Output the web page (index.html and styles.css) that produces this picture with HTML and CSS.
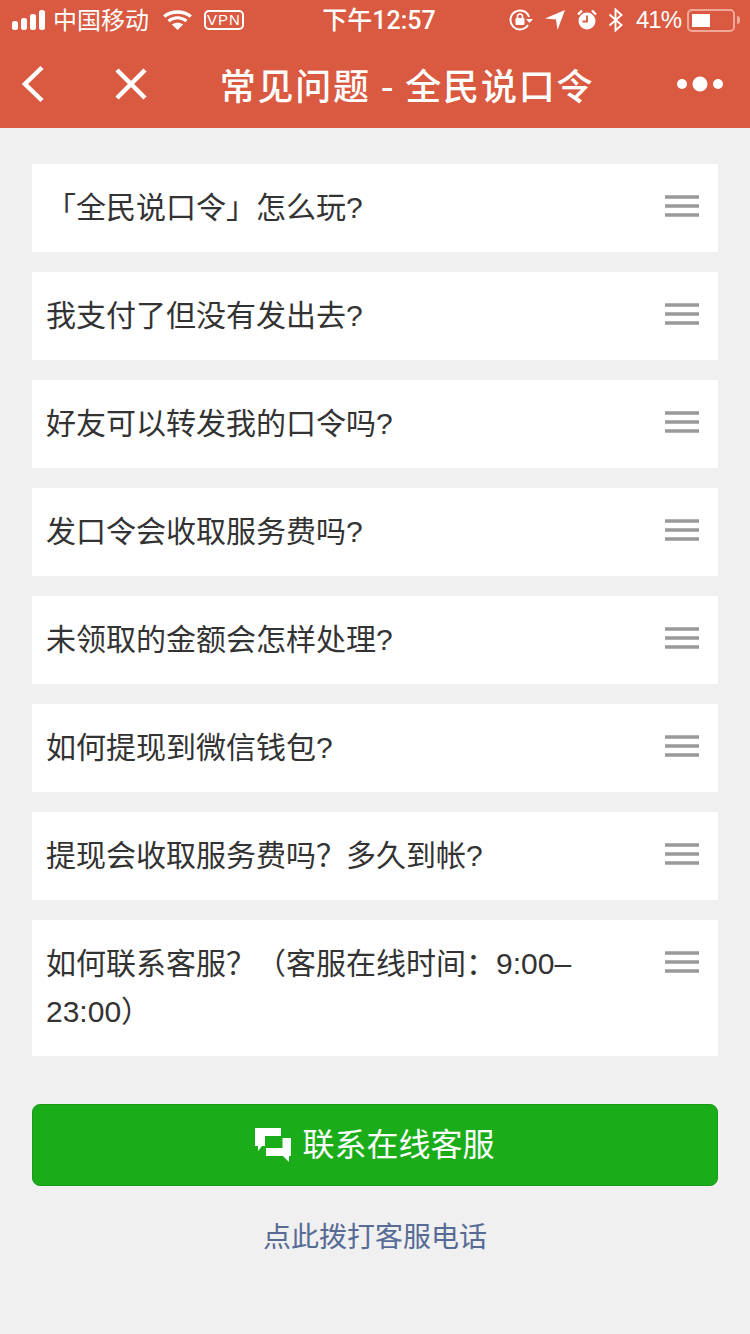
FILE: index.html
```html
<!DOCTYPE html>
<html lang="zh-CN">
<head>
    <meta charset="UTF-8">
    <title>常见问题 - 全民说口令</title>
    <link rel="stylesheet" href="styles.css">
</head>
<body>
<svg class="defs" width="0" height="0">
    <symbol id="menu" viewBox="0 0 34 22">
        <path d="M0 2H34M0 11H34M0 20H34" stroke="#999" stroke-width="3.500" fill="none"/>
    </symbol>
</svg>
<div class="head">
    <div class="status">
        <div class="status-left">
            <svg class="signal" width="33" height="20" viewBox="0 0 33 20">
                <rect x="0" y="11" width="6" height="9" rx="2.500"/>
                <rect x="9" y="8" width="6" height="12" rx="2.500"/>
                <rect x="18" y="4" width="6" height="16" rx="2.500"/>
                <rect x="27" y="0" width="6" height="20" rx="2.500"/>
            </svg>
            <span class="carrier">中国移动</span>
            <svg class="wifi" width="29" height="20" viewBox="0 0 29 20">
                <path d="M1.200 6.500C8.500 0.500 20.500 0.500 27.800 6.500M5.500 11C11 6.800 18 6.800 23.500 11" fill="none" stroke="#fff" stroke-width="3.400"/>
                <path d="M8.800 14.600L14.500 20L20.200 14.600C17 12 12 12 8.800 14.600Z" fill="#fff"/>
            </svg>
            <span class="vpn">VPN</span>
        </div>
        <div class="time">下午12:57</div>
        <div class="status-right">
            <svg class="lock" width="24" height="22" viewBox="0 0 24 22">
                <path d="M19 16A9.500 9.500 0 1 1 20 8" fill="none" stroke="#fff" stroke-width="2"/>
                <path d="M17 10H24L20.500 14Z" fill="#fff"/>
                <path d="M8.500 9V7.500A2.500 2.500 0 0 1 13.500 7.500V9" fill="none" stroke="#fff" stroke-width="1.600"/>
                <rect x="6.500" y="9" width="9" height="7" rx="1" fill="#fff"/>
            </svg>
            <svg class="arrow" width="20" height="20" viewBox="0 0 20 20">
                <path d="M0 8.500L20 0L12.500 20L11 9.500Z" fill="#fff"/>
            </svg>
            <svg class="alarm" width="20" height="22" viewBox="0 0 20 22">
                <circle cx="10" cy="12" r="8.500" fill="#fff"/>
                <path d="M10 6.500V12.500H5.500" fill="none" stroke="#d95a40" stroke-width="1.800"/>
                <path d="M1 5.500L5 1.500M19 5.500L15 1.500" stroke="#fff" stroke-width="2.400" fill="none"/>
            </svg>
            <svg class="blue" width="16" height="24" viewBox="0 0 16 24">
                <path d="M1.500 6.500L13.500 17L7.500 22.500V1.500L13.500 7L1.500 17.500" fill="none" stroke="#fff" stroke-width="1.900"/>
            </svg>
            <span class="percent">41%</span>
            <div class="battery"><i class="battery-fill"></i></div>
            <i class="battery-cap"></i>
        </div>
    </div>
    <div class="nav">
        <svg class="nav-back" width="24" height="38" viewBox="0 0 24 38">
            <path d="M21 2.500L4 19L21 35.500" fill="none" stroke="#fff" stroke-width="4.500"/>
        </svg>
        <svg class="nav-close" width="32" height="32" viewBox="0 0 32 32">
            <path d="M2 2L30 30M30 2L2 30" fill="none" stroke="#fff" stroke-width="4.500"/>
        </svg>
        <h1 class="nav-title">常见问题 - 全民说口令</h1>
        <svg class="nav-more" width="46" height="18" viewBox="0 0 46 18">
            <circle cx="5" cy="9" r="5" fill="#fff"/>
            <circle cx="23" cy="9" r="7.500" fill="#fff"/>
            <circle cx="41" cy="9" r="5" fill="#fff"/>
        </svg>
    </div>
</div>

<ul class="list">
    <li><span>「全民说口令」怎么玩?</span><svg class="icon"><use href="#menu"/></svg></li>
    <li><span>我支付了但没有发出去?</span><svg class="icon"><use href="#menu"/></svg></li>
    <li><span>好友可以转发我的口令吗?</span><svg class="icon"><use href="#menu"/></svg></li>
    <li><span>发口令会收取服务费吗?</span><svg class="icon"><use href="#menu"/></svg></li>
    <li><span>未领取的金额会怎样处理?</span><svg class="icon"><use href="#menu"/></svg></li>
    <li><span>如何提现到微信钱包?</span><svg class="icon"><use href="#menu"/></svg></li>
    <li><span>提现会收取服务费吗？多久到帐?</span><svg class="icon"><use href="#menu"/></svg></li>
    <li><span>如何联系客服？（客服在线时间：9:00–23:00）</span><svg class="icon"><use href="#menu"/></svg></li>
</ul>

<a class="btn">
    <svg class="btn-icon" width="36" height="34" viewBox="0 0 36 34">
        <path d="M0 0H26V8H10V18H7L3 23V18H0Z" fill="#fff"/>
        <path d="M27.500 10H36V28H34V34L28 28H11V20H27.500Z" fill="#fff"/>
    </svg>
    <span>联系在线客服</span>
</a>
<a class="tel">点此拨打客服电话</a>
</body>
</html>
```

FILE: styles.css
```css
*{
    margin: 0;
    padding: 0;
    list-style: none;
    box-sizing: border-box;
}
body{
    background: #f0f0f0;
    font-family: "Liberation Sans", "Noto Sans CJK SC", sans-serif;
    color: #333;
}
.defs{
    position: absolute;
}
.head{
    background: #d95a40;
    color: #fff;
}
.status{
    height: 40px;
    display: flex;
    align-items: center;
    font-size: 24px;
}
.status-left{
    flex: 1;
    display: flex;
    align-items: center;
    padding-left: 12px;
}
.carrier{
    margin-left: 8px;
    width: 96px;
    white-space: nowrap;
    line-height: 28px;
    padding-top: 1px;
}
.signal{
    fill: #fff;
}
.wifi{
    margin-left: 14px;
}
.vpn{
    margin-left: 12px;
    width: 40px;
    height: 20px;
    border: 2px solid #fff;
    border-radius: 5px;
    font-size: 15px;
    line-height: 16px;
    letter-spacing: 1px;
    text-align: center;
}
.time{
    margin-left: 6px;
    font-family: Roboto, "Noto Sans CJK SC", sans-serif;
    font-weight: 500;
    font-size: 25px;
    line-height: 30px;
    padding-top: 1px;
    white-space: nowrap;
}
.status-right{
    flex: 1;
    display: flex;
    align-items: center;
    justify-content: flex-end;
    padding-right: 10px;
}
.arrow{
    margin-left: 12px;
}
.alarm{
    margin-left: 12px;
}
.blue{
    margin-left: 11px;
}
.percent{
    margin-left: 12px;
    font-size: 24px;
    letter-spacing: -1px;
}
.battery{
    margin-left: 6px;
    width: 48px;
    height: 23px;
    padding: 3px;
    border: 2px solid #f0a999;
    border-radius: 5px;
}
.battery-fill{
    display: block;
    width: 18px;
    height: 100%;
    background: #fff;
}
.battery-cap{
    margin-left: 2px;
    width: 3px;
    height: 8px;
    background: #f0a999;
    border-radius: 0 3px 3px 0;
}
.nav{
    height: 88px;
    display: flex;
    align-items: center;
    padding: 0 27px 0 21px;
}
.nav-close{
    margin-left: 70px;
}
.nav-title{
    flex: 1;
    margin-right: 10px;
    text-align: center;
    font-family: "Noto Sans CJK SC", sans-serif;
    font-size: 36px;
    font-weight: 500;
    letter-spacing: 1.800px;
    line-height: 50px;
    white-space: nowrap;
}
.list{
    padding: 36px 32px 0;
}
.list li{
    display: flex;
    align-items: flex-start;
    margin-bottom: 20px;
    padding: 20px 19px 20px 14px;
    background: #fff;
    font-size: 30px;
    line-height: 48px;
}
.list li span{
    flex: 1;
}
.icon{
    flex: none;
    width: 34px;
    height: 22px;
    margin-top: 11px;
    margin-left: 21px;
}
.btn{
    display: flex;
    align-items: center;
    justify-content: center;
    height: 82px;
    margin: 48px 32px 0;
    background: #1aad19;
    border: 1px solid #179b16;
    border-radius: 8px;
    color: #fff;
    font-size: 32px;
}
.btn span{
    padding-bottom: 6px;
}
.btn-icon{
    margin-right: 11px;
}
.tel{
    display: block;
    margin-top: 32px;
    text-align: center;
    font-size: 28px;
    line-height: 40px;
    color: #576b95;
}
```
